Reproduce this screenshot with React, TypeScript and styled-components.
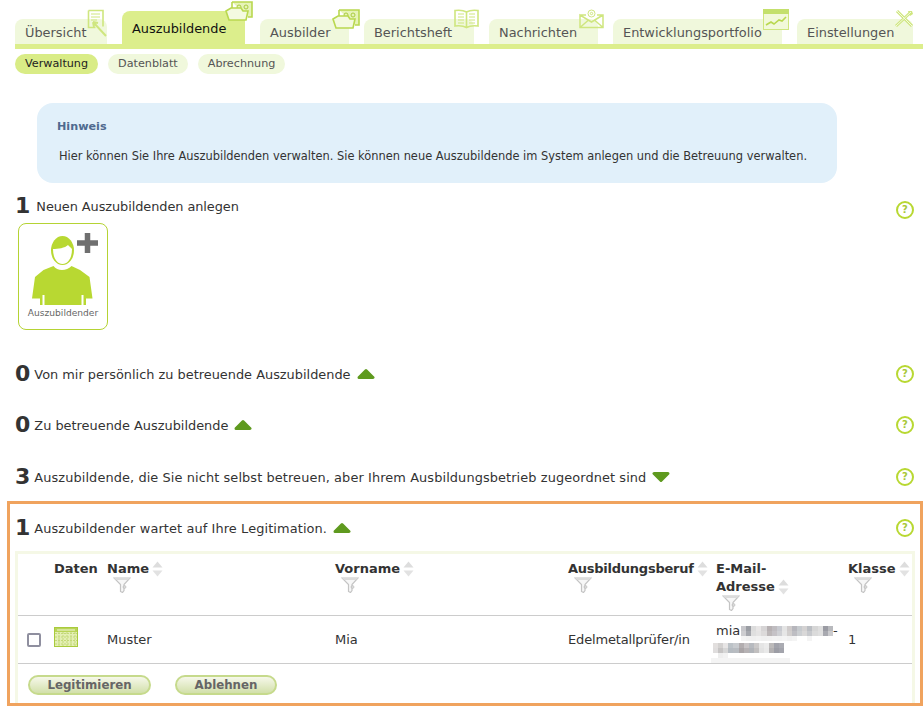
import React from "react";
import styled, { createGlobalStyle } from "styled-components";

const GlobalStyle = createGlobalStyle`
  html, body {
    margin: 0;
    padding: 0;
    background: #fff;
  }
  body {
    font-family: "DejaVu Sans", Verdana, sans-serif;
    font-size: 13px;
    color: #333;
  }
`;

const Page = styled.div`
  width: 923px;
  height: 716px;
  overflow: hidden;
  box-sizing: border-box;
`;

/* top navigation */
const TabBar = styled.nav`
  display: flex;
  align-items: flex-end;
  gap: 15px;
  height: 33px;
  margin: 11px 0 0 15px;
  border-bottom: 5px solid #dcee8c;
`;
const Tab = styled.a<{ $active?: boolean; $width: number }>`
  position: relative;
  box-sizing: border-box;
  width: ${({ $width }) => $width}px;
  height: ${({ $active }) => ($active ? 33 : 25)}px;
  padding: ${({ $active }) => ($active ? "10px" : "6px")} 0 0 10px;
  border-radius: 8px 8px 0 0;
  background: ${({ $active }) => ($active ? "#dcee8c" : "#f0f8dc")};
  color: ${({ $active }) => ($active ? "#111" : "#555")};
  font-size: 12.9px;
  line-height: 16px;
  white-space: nowrap;
`;
const TabIcon = styled.svg<{ $right: number; $top: number }>`
  position: absolute;
  right: ${({ $right }) => $right}px;
  top: ${({ $top }) => $top}px;
  fill: none;
`;

const SubNav = styled.div`
  display: flex;
  gap: 10px;
  margin: 5px 0 0 15px;
`;
const Pill = styled.a<{ $active?: boolean }>`
  box-sizing: border-box;
  height: 20px;
  padding: 0 10px;
  border-radius: 10px;
  background: ${({ $active }) => ($active ? "#d9ec86" : "#f0f8dc")};
  color: ${({ $active }) => ($active ? "#222" : "#555")};
  font-size: 11.2px;
  line-height: 20px;
`;

/* hint box */
const Hint = styled.div`
  box-sizing: border-box;
  width: 800px;
  height: 80px;
  margin: 29px 0 0 37px;
  padding: 17px 20px 0;
  border-radius: 16px;
  background: #e1f0fa;
`;
const HintTitle = styled.div`
  color: #4f6a8f;
  font-size: 11.2px;
  font-weight: 700;
  line-height: 14px;
`;
const HintText = styled.p`
  margin: 15px 0 0 2px;
  color: #333;
  font-size: 11.43px;
  line-height: 14px;
  white-space: nowrap;
`;

/* section headings */
const SectionRow = styled.div<{ $mt: number }>`
  display: flex;
  align-items: center;
  height: 26px;
  margin-top: ${({ $mt }) => $mt}px;
  padding: 0 9px 0 15px;
`;
const Count = styled.span<{ $gap?: number }>`
  margin-right: ${({ $gap }) => $gap ?? 4}px;
  color: #333;
  font-size: 22px;
  font-weight: 700;
  line-height: 26px;
`;
const SectionTitle = styled.span<{ $spacing?: number }>`
  color: #333;
  font-size: 12.9px;
  line-height: 16px;
  margin-top: 1px;
  letter-spacing: ${({ $spacing }) => $spacing ?? 0}px;
  white-space: nowrap;
`;
const Toggle = styled.svg`
  margin-left: 6px;
  flex: none;
`;
const Help = styled.span<{ $shift?: number }>`
  box-sizing: border-box;
  width: 18px;
  height: 18px;
  margin: ${({ $shift }) => $shift ?? 0}px 0 0 auto;
  border: 2px solid #b8d832;
  border-radius: 50%;
  color: #a8c83a;
  font-size: 10px;
  font-weight: 700;
  line-height: 14px;
  text-align: center;
`;

const AddCard = styled.a`
  display: flex;
  flex-direction: column;
  align-items: center;
  box-sizing: border-box;
  width: 90px;
  height: 107px;
  margin: 4px 0 0 18px;
  padding-top: 9px;
  border: 1px solid #b5d334;
  border-radius: 8px;
  color: #666;
  font-size: 9.1px;
  line-height: 12px;
`;
const PersonSvg = styled.svg`
  flex: none;
  margin-left: 4px;
`;
const CardLabel = styled.span`
  margin-top: 2px;
`;

/* legitimation panel */
const Panel = styled.section`
  box-sizing: border-box;
  width: 916px;
  height: 205px;
  margin: 11px 0 0 7px;
  border: 3px solid #f0a35e;
  display: flex;
  flex-direction: column;
`;
const PanelHead = styled.div`
  display: flex;
  align-items: center;
  height: 26px;
  margin-top: 11px;
  padding: 0 6px 0 5px;
`;
const TableFrame = styled.div`
  box-sizing: border-box;
  flex: 1;
  width: 900px;
  margin: 10px 0 0 5px;
  border: solid #f5f8e6;
  border-width: 3px 3px 0;
`;
const DataTable = styled.table`
  width: 894px;
  table-layout: fixed;
  border-collapse: collapse;
`;
const HeadRow = styled.tr`
  height: 61px;
  border-bottom: 1px solid #ccc;
`;
const BodyRow = styled.tr`
  height: 47px;
  border-bottom: 1px solid #ccc;
`;
const HeadCell = styled.th<{ $tight?: boolean }>`
  padding: 6px 0 0;
  vertical-align: top;
  text-align: left;
  color: #333;
  font-size: 13px;
  font-weight: 700;
  line-height: 18px;
  letter-spacing: ${({ $tight }) => ($tight ? "-0.25px" : "normal")};
`;
const Sortable = styled.span`
  display: inline-flex;
  align-items: center;
  gap: 1px;
`;
const SortArrows = styled.svg`
  vertical-align: middle;
  margin-left: 2px;
`;
const FilterIcon = styled.svg`
  display: block;
  margin: -1px 0 0 6px;
`;
const Cell = styled.td<{ $tight?: boolean }>`
  padding: 2px 0 0;
  vertical-align: middle;
  color: #333;
  font-size: 13px;
  line-height: 18px;
  letter-spacing: ${({ $tight }) => ($tight ? "-0.17px" : "normal")};
`;
const Checkbox = styled.span`
  display: block;
  box-sizing: border-box;
  width: 14px;
  height: 14px;
  margin-left: 9px;
  border: 2px solid #8f8f9f;
  border-radius: 2px;
`;
const Calendar = styled.svg`
  display: block;
  margin-top: -7px;
`;
const EmailLine = styled.div`
  display: flex;
  align-items: flex-start;
  height: 20px;
`;
const EmailCellInner = styled.div`
  position: relative;
  height: 47px;
  margin-top: -2px;
  padding-top: 6px;
  box-sizing: border-box;
`;
const MosaicSvg = styled.svg<{ $left: number; $top: number }>`
  flex: none;
  margin: ${({ $top }) => $top}px 0 0 ${({ $left }) => $left}px;
`;
const BlurStrip = styled.span`
  position: absolute;
  left: -5px;
  bottom: 0;
  width: 79px;
  height: 5px;
  background: #f4f4f4;
`;
const Actions = styled.div`
  display: flex;
  gap: 24px;
  padding: 11px 0 0 10px;
`;
const ActionButton = styled.button<{ $width: number }>`
  box-sizing: border-box;
  width: ${({ $width }) => $width}px;
  height: 20px;
  padding: 0;
  border: 2px solid #c6da8c;
  border-radius: 10px;
  background: linear-gradient(#f6f8ea, #d2e0aa);
  color: #666;
  font-family: inherit;
  font-size: 11.8px;
  font-weight: 700;
  line-height: 16px;
`;

const Arrow = ({ down }: { down?: boolean }) => (
  <Toggle width="18" height="12" viewBox="0 0 18 12">
    <path
      d={down ? "M2 2.500H16L9 9.500z" : "M9 2.500L16 9.500H2z"}
      fill="#5f9a1f"
      stroke="#5f9a1f"
      strokeWidth="3"
      strokeLinejoin="round"
    />
  </Toggle>
);

const Sort = () => (
  <SortArrows width="11" height="16" viewBox="0 0 11 16">
    <path d="M5.500 0.500L10.500 6.500H0.500z" fill="#ddd" />
    <path d="M0.500 9.500H10.500L5.500 15.500z" fill="#e2e2e2" />
  </SortArrows>
);

const Funnel = () => (
  <FilterIcon width="18" height="16" viewBox="0 0 18 16">
    <path
      d="M1 1h16l-6 6.500v6l-1.500 2-2-1V7.500z"
      fill="#f7f7f7"
      stroke="#c4c4c4"
      strokeWidth="1.2"
    />
    <path d="M1 1h16l-2 2H3z" fill="#dcdcdc" />
    <circle cx="11.500" cy="10" r="1.400" fill="none" stroke="#c4c4c4" />
  </FilterIcon>
);

const PALE = "#cfe67f";

const NotepadIcon = () => (
  <TabIcon $right={0} $top={-10} width="20" height="29" viewBox="0 0 20 29">
    <path d="M1.500 1.500h14.500v16M1.500 1.500v17h7" stroke={PALE} strokeWidth="1.600" />
    <path d="M4 5h9M4 8h9M4 11h6" stroke={PALE} />
    <path d="M6 13l13 14M6 13l5 1M6 13l1 5" stroke={PALE} strokeWidth="2" />
  </TabIcon>
);

const FolderIcon = ({ right, top }: { right: number; top: number }) => (
  <TabIcon $right={right} $top={top} width="28" height="21" viewBox="0 0 28 21">
    <path d="M7 1h20v15h-4M7 1v6" stroke="#b9d84f" strokeWidth="1.600" fill="#e6f3b8" />
    <circle cx="14" cy="6" r="2" stroke="#a9cc3f" />
    <circle cx="21" cy="6" r="2" stroke="#a9cc3f" />
    <path d="M1 10l5-3h10l2 3h5l-2 9H4z" fill="#f4fae0" stroke="#b9d84f" strokeWidth="1.600" />
  </TabIcon>
);

const BookIcon = () => (
  <TabIcon $right={-5} $top={-10} width="25" height="20" viewBox="0 0 25 20">
    <path
      d="M12.500 3C9 1 5 1 1 1.500V17c4-.5 8-.5 11.500 1.500 3.500-2 7.500-2 11.500-1.500V1.500C20 1 16 1 12.500 3zM12.500 3v15"
      stroke={PALE}
      strokeWidth="1.600"
    />
    <path d="M4 5h6M4 8h6M4 11h6M4 14h6M15 5h6M15 8h6M15 11h6M15 14h6" stroke={PALE} />
  </TabIcon>
);

const EnvelopeIcon = () => (
  <TabIcon $right={-6} $top={-10} width="25" height="20" viewBox="0 0 25 20">
    <path
      d="M1 6h6M18 6h6v12.500H1V6l11.500 7L24 6M1 18.500l8-7M24 18.500l-8-7"
      stroke={PALE}
      strokeWidth="1.500"
    />
    <circle cx="12.500" cy="4.500" r="3.500" stroke={PALE} />
    <circle cx="12.500" cy="4.500" r="1.200" stroke={PALE} />
  </TabIcon>
);

const ChartIcon = () => (
  <TabIcon $right={-7} $top={-10} width="26" height="21" viewBox="0 0 26 21">
    <rect x="0.500" y="0.500" width="25" height="20" fill="#f2f9da" stroke={PALE} />
    <rect x="0" y="0" width="26" height="5" fill="#c4e06c" />
    <path d="M3 16l5-3 3 2 5-4 3 1 4-4" stroke="#b9d84f" strokeWidth="1.600" />
  </TabIcon>
);

const ToolsIcon = () => (
  <TabIcon $right={-1} $top={-10} width="20" height="20" viewBox="0 0 20 20">
    <path d="M3 2l15 15" stroke={PALE} strokeWidth="3" />
    <path d="M17 3L2 17" stroke={PALE} strokeWidth="3" />
    <path d="M14 2l4 0 1 3-3 2z" fill={PALE} />
    <path d="M3 2l15 15M17 3L2 17" stroke="#f4fae0" strokeWidth="1" />
  </TabIcon>
);

const PersonAddIcon = () => (
  <PersonSvg width="66" height="72" viewBox="0 0 66 72">
    <ellipse cx="30.500" cy="17.500" rx="11.500" ry="14.500" fill="#b8d832" />
    <path d="M21 16c5 0 12-1 15-4 1 1 3 3 4 4 0 9-4 15-9.500 15S21 25 21 16z" fill="#fff" />
    <path
      d="M11.500 37l10-4c2 2.500 5 4 8.500 4s7-1.500 9.500-4l8.500 4 9.500 7 3 21.500h-6.500V72H8v-6.500H0L3 44z"
      fill="#b8d832"
    />
    <path d="M11.500 62v10M50.500 62v10" stroke="#fff" strokeWidth="2" />
    <path d="M55.500 0v20M45 10h21" stroke="#6f6f6f" strokeWidth="5.500" />
  </PersonSvg>
);

const CalendarIcon = () => (
  <Calendar width="24" height="20" viewBox="0 0 24 20">
    <rect width="24" height="20" fill="#a9cb3c" />
    <rect x="1" y="1" width="22" height="18" fill="#e4efb4" />
    <rect x="1" y="1" width="22" height="4" fill="#b9d457" />
    <path d="M3 3h18" stroke="#f3f8dc" />
    <path
      d="M1 6.500h22M1 10h22M1 13.500h22M1 17h22M5 5v14M9 5v14M13 5v14M17 5v14M21 5v14"
      stroke="#c3d978"
      strokeDasharray="2 1"
    />
  </Calendar>
);

const mosaicLine1 = [
  "c6c6ca 9a9da3 dcdcdc e8e6e6 d6d4d5 b6b0b2 bfbcc0 c8cad0 e4e4e4 cfcbcb b6b6bc c6cace d4d2d2 bbbec3 d6d6d6 dfdfdf 9a9ba3 b8b9bd",
  "cdcdd0 a6a8ae dfdfdf e5e4e4 dcdada bcb7b8 c5c2c6 cfd0d4 e6e6e6 d2cfce bebec3 cccfd2 d9d8d8 c7c9cd dbdbdb e0e0e0 a8a9b0 cbcbce",
  "f4f4f4 f1f1f1 f0f0f0 f2f2f2 f0f0f0 f1f1f1 f3f3f3 f2f2f2 f4f4f4 f1f1f1 f4f4f4 ffffff ffffff f4f4f4 ffffff ffffff ffffff ffffff",
];
const mosaicLine2 = [
  "e2dfde d3d1d0 e7e5e5 bcc2c7 c8cbcf b2adaf c8c4c6 b7babf cbc9c9 e5e5e5 ebebeb bcbaba a2a3ab aaabb2",
  "dfdddd c6c4c4 d6d6d6 b5bbc1 b8bcc1 a9a4a6 b6b2b4 b0b3b8 c1bfbf e2e2e2 e9e9e9 b3b1b2 9c9da5 a3a4ac",
  "ffffff eeeeee f2f2f2 ffffff ffffff ffffff ffffff ffffff ffffff ffffff ffffff ffffff ffffff ffffff",
];

// pixelated address, drawn from the block colours above
const Mosaic = ({
  rows,
  block,
  left,
  top,
}: {
  rows: string[];
  block: number;
  left: number;
  top: number;
}) => {
  const cells = rows.map((r) => r.split(" "));
  return (
    <MosaicSvg
      $left={left}
      $top={top}
      width={cells[0].length * block}
      height={rows.length * 5}
      shapeRendering="crispEdges"
    >
      {cells.map((row, y) =>
        row.map((c, x) => (
          <rect
            key={`${x}-${y}`}
            x={x * block}
            y={y * 5}
            width={block}
            height={5}
            fill={`#${c}`}
          />
        ))
      )}
    </MosaicSvg>
  );
};

const Section = ({
  count,
  title,
  down,
  mt,
  spacing,
}: {
  count: number;
  title: string;
  down?: boolean;
  mt: number;
  spacing?: number;
}) => (
  <SectionRow $mt={mt}>
    <Count>{count}</Count>
    <SectionTitle $spacing={spacing}>{title}</SectionTitle>
    <Arrow down={down} />
    <Help>?</Help>
  </SectionRow>
);

const columns = [
  { key: "name", label: "Name" },
  { key: "vorname", label: "Vorname" },
  { key: "beruf", label: "Ausbildungsberuf", tight: true },
];

const App = () => (
  <Page>
    <GlobalStyle />
    <TabBar>
      <Tab $width={92}>
        Übersicht
        <NotepadIcon />
      </Tab>
      <Tab $active $width={123}>
        Auszubildende
        <FolderIcon right={-8} top={-10} />
      </Tab>
      <Tab $width={89}>
        Ausbilder
        <FolderIcon right={-11} top={-10} />
      </Tab>
      <Tab $width={110}>
        Berichtsheft
        <BookIcon />
      </Tab>
      <Tab $width={109}>
        Nachrichten
        <EnvelopeIcon />
      </Tab>
      <Tab $width={169}>
        Entwicklungsportfolio
        <ChartIcon />
      </Tab>
      <Tab $width={116}>
        Einstellungen
        <ToolsIcon />
      </Tab>
    </TabBar>
    <SubNav>
      <Pill $active>Verwaltung</Pill>
      <Pill>Datenblatt</Pill>
      <Pill>Abrechnung</Pill>
    </SubNav>

    <Hint>
      <HintTitle>Hinweis</HintTitle>
      <HintText>
        Hier können Sie Ihre Auszubildenden verwalten. Sie können neue Auszubildende im System
        anlegen und die Betreuung verwalten.
      </HintText>
    </Hint>

    <SectionRow $mt={10}>
      <Count $gap={6}>1</Count>
      <SectionTitle $spacing={-0.07}>Neuen Auszubildenden anlegen</SectionTitle>
      <Help $shift={8}>?</Help>
    </SectionRow>
    <AddCard>
      <PersonAddIcon />
      <CardLabel>Auszubildender</CardLabel>
    </AddCard>

    <Section count={0} title="Von mir persönlich zu betreuende Auszubildende" mt={31} />
    <Section count={0} title="Zu betreuende Auszubildende" mt={25} />
    <Section
      count={3}
      title="Auszubildende, die Sie nicht selbst betreuen, aber Ihrem Ausbildungsbetrieb zugeordnet sind"
      down
      mt={26}
      spacing={0.1}
    />

    <Panel>
      <PanelHead>
        <Count>1</Count>
        <SectionTitle $spacing={0.11}>Auszubildender wartet auf Ihre Legitimation.</SectionTitle>
        <Arrow />
        <Help>?</Help>
      </PanelHead>
      <TableFrame>
        <DataTable>
          <colgroup>
            <col width="36" />
            <col width="53" />
            <col width="228" />
            <col width="233" />
            <col width="148" />
            <col width="132" />
            <col width="64" />
          </colgroup>
          <thead>
            <HeadRow>
              <HeadCell />
              <HeadCell>Daten</HeadCell>
              {columns.map((c) => (
                <HeadCell key={c.key} $tight={c.tight}>
                  <Sortable>
                    {c.label}
                    <Sort />
                  </Sortable>
                  <Funnel />
                </HeadCell>
              ))}
              <HeadCell>
                E-Mail-
                <br />
                <Sortable>
                  Adresse
                  <Sort />
                </Sortable>
                <Funnel />
              </HeadCell>
              <HeadCell>
                <Sortable>
                  Klasse
                  <Sort />
                </Sortable>
                <Funnel />
              </HeadCell>
            </HeadRow>
          </thead>
          <tbody>
            <BodyRow>
              <Cell>
                <Checkbox />
              </Cell>
              <Cell>
                <CalendarIcon />
              </Cell>
              <Cell>Muster</Cell>
              <Cell>Mia</Cell>
              <Cell $tight>Edelmetallprüfer/in</Cell>
              <Cell>
                <EmailCellInner>
                  <EmailLine>
                    mia
                    <Mosaic rows={mosaicLine1} block={5.1} left={1} top={4} />-
                  </EmailLine>
                  <EmailLine>
                    <Mosaic rows={mosaicLine2} block={5.1} left={-3} top={1} />
                  </EmailLine>
                  <BlurStrip />
                </EmailCellInner>
              </Cell>
              <Cell>1</Cell>
            </BodyRow>
          </tbody>
        </DataTable>
        <Actions>
          <ActionButton $width={123}>Legitimieren</ActionButton>
          <ActionButton $width={102}>Ablehnen</ActionButton>
        </Actions>
      </TableFrame>
    </Panel>
  </Page>
);

export default App;
